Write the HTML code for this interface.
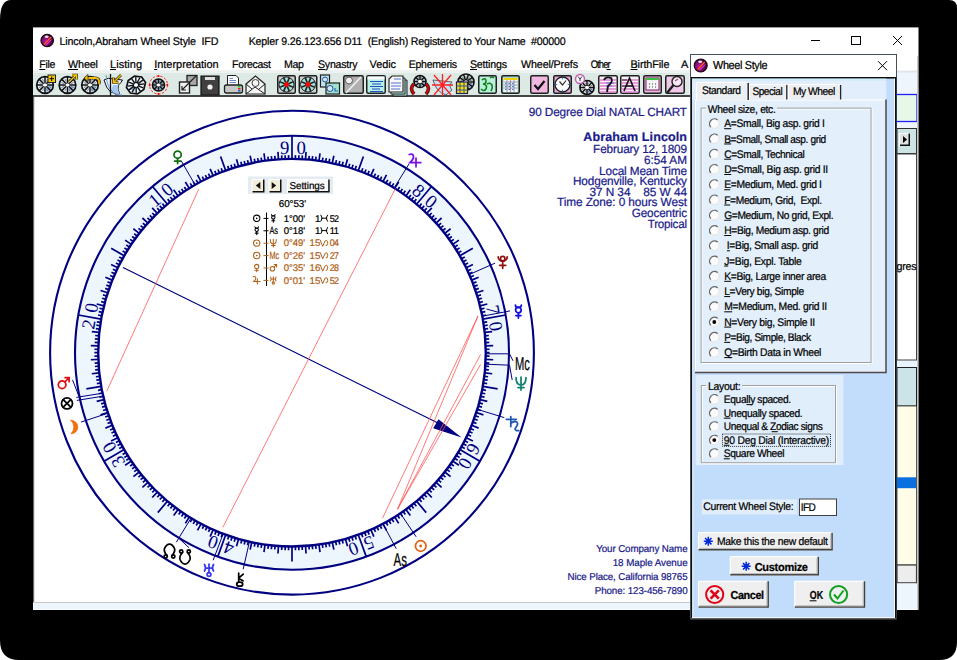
<!DOCTYPE html><html><head><meta charset="utf-8"><title>Kepler Wheel Style</title><style>*{margin:0;padding:0}html,body{width:957px;height:660px;overflow:hidden;background:#fff}body{position:relative;font-family:"Liberation Sans",sans-serif}</style></head><body><svg width="957" height="660" viewBox="0 0 957 660" style="position:absolute;left:0;top:0;display:block" shape-rendering="auto" text-rendering="geometricPrecision">
<defs><radialGradient id="gIcon" cx="0.4" cy="0.55" r="0.6"><stop offset="0" stop-color="#c018b0"/><stop offset="0.55" stop-color="#701060"/><stop offset="1" stop-color="#280020"/></radialGradient></defs>
<path d="M11 0H949Q957 0 957 8V642Q957 660 939 660H19Q0 660 0 640V20Q0 0 11 0Z" fill="#000"/>
<rect x="33" y="27.4" width="885.5" height="582.6" fill="#fff"/>
<rect x="33" y="70" width="885" height="3" fill="#eef2f1"/>
<rect x="33" y="73" width="885" height="22" fill="#dde9e5"/><rect x="689" y="73" width="3" height="22" fill="#eef3f2"/>
<rect x="33" y="95" width="885" height="2" fill="#454545"/>
<rect x="33" y="97" width="1.2" height="506" fill="#6a6a6a"/>
<rect x="33" y="602" width="885" height="1" fill="#c8c8c8"/>
<rect x="34" y="603" width="883" height="6" fill="#eef6fd"/>
<circle cx="47.2" cy="40.5" r="6.3" fill="url(#gIcon)" stroke="#1a0010" stroke-width="1.1"/><path d="M44.2 44.5L51.2 37.0" stroke="#ff5020" stroke-width="1.6"/><path d="M45.7 45.5L51.7 39.5" stroke="#ff40ff" stroke-width="1"/><ellipse cx="46.7" cy="36.7" rx="2" ry="1.3" fill="#fff" opacity="0.85"/>
<g transform="translate(59.5,45.1) scale(0.9725,1)"><text x="0" y="0" font-family="Liberation Sans" font-size="11" fill="#000" stroke="#000" stroke-width="0.22" text-anchor="start" textLength="163.50" lengthAdjust="spacing" style="white-space:pre" >Lincoln,Abraham Wheel Style  IFD</text></g>
<g transform="translate(248.7,45.1) scale(0.9656,1)"><text x="0" y="0" font-family="Liberation Sans" font-size="11" fill="#000" stroke="#000" stroke-width="0.22" text-anchor="start" textLength="328.30" lengthAdjust="spacing" style="white-space:pre" >Kepler 9.26.123.656 D11  (English) Registered to Your Name  #00000</text></g>
<path d="M811 40.5H820" stroke="#000" stroke-width="1"/>
<rect x="851.5" y="36.5" width="9" height="8" fill="none" stroke="#000" stroke-width="1"/>
<path d="M893 36L902 45M902 36L893 45" stroke="#000" stroke-width="1"/>
<g transform="translate(39.3,67.7) scale(0.9531,1)"><text x="0" y="0" font-family="Liberation Sans" font-size="11" fill="#000" stroke="#000" stroke-width="0.22" text-anchor="start" textLength="16.89" lengthAdjust="spacing" style="white-space:pre" >File</text></g>
<rect x="39.3" y="69" width="6.0" height="1" fill="#000"/>
<g transform="translate(68,67.7) scale(0.9809,1)"><text x="0" y="0" font-family="Liberation Sans" font-size="11" fill="#000" stroke="#000" stroke-width="0.22" text-anchor="start" textLength="30.58" lengthAdjust="spacing" style="white-space:pre" >Wheel</text></g>
<rect x="68" y="69" width="10" height="1" fill="#000"/>
<text x="110" y="67.7" font-family="Liberation Sans" font-size="11" fill="#000" stroke="#000" stroke-width="0.22" text-anchor="start" textLength="32.00" lengthAdjust="spacing" style="white-space:pre" >Listing</text>
<rect x="110" y="69" width="6" height="1" fill="#000"/>
<g transform="translate(154.2,67.7) scale(0.9968,1)"><text x="0" y="0" font-family="Liberation Sans" font-size="11" fill="#000" stroke="#000" stroke-width="0.22" text-anchor="start" textLength="64.61" lengthAdjust="spacing" style="white-space:pre" >Interpretation</text></g>
<rect x="154.2" y="69" width="3.0" height="1" fill="#000"/>
<g transform="translate(232,67.7) scale(0.9547,1)"><text x="0" y="0" font-family="Liberation Sans" font-size="11" fill="#000" stroke="#000" stroke-width="0.22" text-anchor="start" textLength="40.85" lengthAdjust="spacing" style="white-space:pre" >Forecast</text></g>
<g transform="translate(284,67.7) scale(0.9668,1)"><text x="0" y="0" font-family="Liberation Sans" font-size="11" fill="#000" stroke="#000" stroke-width="0.22" text-anchor="start" textLength="20.69" lengthAdjust="spacing" style="white-space:pre" >Map</text></g>
<g transform="translate(318,67.7) scale(0.9620,1)"><text x="0" y="0" font-family="Liberation Sans" font-size="11" fill="#000" stroke="#000" stroke-width="0.22" text-anchor="start" textLength="41.16" lengthAdjust="spacing" style="white-space:pre" >Synastry</text></g>
<rect x="318" y="69" width="7" height="1" fill="#000"/>
<g transform="translate(369.6,67.7) scale(0.9905,1)"><text x="0" y="0" font-family="Liberation Sans" font-size="11" fill="#000" stroke="#000" stroke-width="0.22" text-anchor="start" textLength="26.65" lengthAdjust="spacing" style="white-space:pre" >Vedic</text></g>
<g transform="translate(408.7,67.7) scale(0.9585,1)"><text x="0" y="0" font-family="Liberation Sans" font-size="11" fill="#000" stroke="#000" stroke-width="0.22" text-anchor="start" textLength="50.39" lengthAdjust="spacing" style="white-space:pre" >Ephemeris</text></g>
<g transform="translate(470,67.7) scale(0.9648,1)"><text x="0" y="0" font-family="Liberation Sans" font-size="11" fill="#000" stroke="#000" stroke-width="0.22" text-anchor="start" textLength="38.35" lengthAdjust="spacing" style="white-space:pre" >Settings</text></g>
<rect x="470" y="69" width="7" height="1" fill="#000"/>
<g transform="translate(521,67.7) scale(0.9754,1)"><text x="0" y="0" font-family="Liberation Sans" font-size="11" fill="#000" stroke="#000" stroke-width="0.22" text-anchor="start" textLength="58.44" lengthAdjust="spacing" style="white-space:pre" >Wheel/Prefs</text></g>
<g transform="translate(590.7,67.7) scale(0.8505,1)"><text x="0" y="0" font-family="Liberation Sans" font-size="11" fill="#000" stroke="#000" stroke-width="0.22" text-anchor="start" textLength="23.40" lengthAdjust="spacing" style="white-space:pre" >Other</text></g>
<rect x="606.6" y="69" width="4.0" height="1" fill="#000"/>
<g transform="translate(630.5,67.7) scale(0.9820,1)"><text x="0" y="0" font-family="Liberation Sans" font-size="11" fill="#000" stroke="#000" stroke-width="0.22" text-anchor="start" textLength="39.61" lengthAdjust="spacing" style="white-space:pre" >BirthFile</text></g>
<rect x="630.5" y="69" width="7.0" height="1" fill="#000"/>
<text x="681" y="67.7" font-family="Liberation Sans" font-size="11" fill="#000" stroke="#000" stroke-width="0.22" text-anchor="start" textLength="8.00" lengthAdjust="spacing" style="white-space:pre" >A</text>
<circle cx="45" cy="85" r="8.3" fill="#eef4fc" stroke="#101010" stroke-width="1.7"/><path d="M46.66 86.66L52.055 85.83A7.055000000000001 7.055000000000001 0 0 1 45.83 92.055Z" fill="#a8c8f0"/><path d="M46.50 85.00L53.30 85.00M46.06 86.06L50.87 90.87M45.00 86.50L45.00 93.30M43.94 86.06L39.13 90.87M43.50 85.00L36.70 85.00M43.94 83.94L39.13 79.13M45.00 83.50L45.00 76.70M46.06 83.94L50.87 79.13" stroke="#101010" stroke-width="1.5"/><path d="M48.45 86.43L51.13 87.54M46.43 88.45L47.54 91.13M43.57 88.45L42.46 91.13M41.55 86.43L38.87 87.54M41.55 83.57L38.87 82.46M43.57 81.55L42.46 78.87M46.43 81.55L47.54 78.87M48.45 83.57L51.13 82.46" stroke="#405060" stroke-width="0.7"/><rect x="43.2" y="83.8" width="3.6" height="2.4" fill="#fff"/>
<rect x="48" y="75" width="7.5" height="7.5" fill="#f8c800" stroke="#202020" stroke-width="1"/><path d="M51.7 76.5V81M49.5 78.7H54" stroke="#000" stroke-width="1"/>
<circle cx="67.5" cy="85" r="8.3" fill="#eef4fc" stroke="#101010" stroke-width="1.7"/><path d="M69.16 86.66L74.555 85.83A7.055000000000001 7.055000000000001 0 0 1 68.33 92.055Z" fill="#a8c8f0"/><path d="M69.00 85.00L75.80 85.00M68.56 86.06L73.37 90.87M67.50 86.50L67.50 93.30M66.44 86.06L61.63 90.87M66.00 85.00L59.20 85.00M66.44 83.94L61.63 79.13M67.50 83.50L67.50 76.70M68.56 83.94L73.37 79.13" stroke="#101010" stroke-width="1.5"/><path d="M70.95 86.43L73.63 87.54M68.93 88.45L70.04 91.13M66.07 88.45L64.96 91.13M64.05 86.43L61.37 87.54M64.05 83.57L61.37 82.46M66.07 81.55L64.96 78.87M68.93 81.55L70.04 78.87M70.95 83.57L73.63 82.46" stroke="#405060" stroke-width="0.7"/><rect x="65.7" y="83.8" width="3.6" height="2.4" fill="#fff"/>
<path d="M69 82L76 75M72 75H76.5V79.5" stroke="#202020" stroke-width="2.6" fill="none"/><path d="M69 82L76 75M72 75H76.5V79.5" stroke="#f8c800" stroke-width="1.4" fill="none"/>
<circle cx="90" cy="85" r="8.3" fill="#eef4fc" stroke="#101010" stroke-width="1.7"/><path d="M91.66 86.66L97.055 85.83A7.055000000000001 7.055000000000001 0 0 1 90.83 92.055Z" fill="#a8c8f0"/><path d="M91.50 85.00L98.30 85.00M91.06 86.06L95.87 90.87M90.00 86.50L90.00 93.30M88.94 86.06L84.13 90.87M88.50 85.00L81.70 85.00M88.94 83.94L84.13 79.13M90.00 83.50L90.00 76.70M91.06 83.94L95.87 79.13" stroke="#101010" stroke-width="1.5"/><path d="M93.45 86.43L96.13 87.54M91.43 88.45L92.54 91.13M88.57 88.45L87.46 91.13M86.55 86.43L83.87 87.54M86.55 83.57L83.87 82.46M88.57 81.55L87.46 78.87M91.43 81.55L92.54 78.87M93.45 83.57L96.13 82.46" stroke="#405060" stroke-width="0.7"/><rect x="88.2" y="83.8" width="3.6" height="2.4" fill="#fff"/>
<path d="M86 78H95Q100 78 99 84" stroke="#202020" stroke-width="3.2" fill="none"/><path d="M86 78H95Q100 78 99 84" stroke="#f8c000" stroke-width="1.8" fill="none"/><path d="M84 78L88 74.5V81.5Z" fill="#f8c000" stroke="#202020" stroke-width="0.8"/>
<path d="M104 80Q108 77 113 79L122.5 80Q121 83 118.5 85Q117 89 119.5 93.5L117 95Q113 92 110.5 92Q106 88 104 80Z" fill="#eef4fc" stroke="#101010" stroke-width="1"/>
<path d="M113 85L118.5 85Q117 89 119.5 93.5L117 95Q113 92 110.5 92Z" fill="#a8c8f0"/>
<path d="M106 75Q107 88 114 93Q118 95 122 95" stroke="#6090d0" stroke-width="0.9" fill="none"/>
<path d="M110.5 74V96" stroke="#101010" stroke-width="1.3"/>
<path d="M121 75L114 82M113.5 77.5V82.5H118.5" stroke="#202020" stroke-width="2.6" fill="none"/><path d="M121 75L114 82M113.5 77.5V82.5H118.5" stroke="#f8c000" stroke-width="1.4" fill="none"/>
<polygon points="145.24,88.37 139.83,93.13 132.17,93.13 126.76,88.37 126.76,81.63 132.17,76.87 139.83,76.87 145.24,81.63" fill="#eef4fc" stroke="#101010" stroke-width="1.7" transform="rotate(-35 136 85)"/>
<path d="M129 88L136 85L134 93Z" fill="#a8c8f0"/>
<path d="M138.00 85.00L144.50 85.00M137.73 85.90L143.36 88.75M137.00 86.56L140.25 91.50M136.00 86.80L136.00 92.50M135.00 86.56L131.75 91.50M134.27 85.90L128.64 88.75M134.00 85.00L127.50 85.00M134.27 84.10L128.64 81.25M135.00 83.44L131.75 78.50M136.00 83.20L136.00 77.50M137.00 83.44L140.25 78.50M137.73 84.10L143.36 81.25" stroke="#101010" stroke-width="1.4" transform="rotate(-35 136 85)"/>
<circle cx="136" cy="85" r="1.5" fill="#fff"/>
<circle cx="158.5" cy="85" r="9" fill="none" stroke="#ff2020" stroke-width="1" stroke-dasharray="2.4 1.6"/>
<path d="M158.5 75.3V77M158.5 93V94.7M148.8 85H150.5M166.5 85H168.2" stroke="#ff0000" stroke-width="1.8"/>
<circle cx="158.5" cy="85" r="6" fill="#b8c8dc" stroke="#101010" stroke-width="1.7"/><path d="M159.7 86.2L163.6 85.6A5.1 5.1 0 0 1 159.1 90.1Z" fill="#a8c8f0"/><path d="M160.00 85.00L164.50 85.00M159.56 86.06L162.74 89.24M158.50 86.50L158.50 91.00M157.44 86.06L154.26 89.24M157.00 85.00L152.50 85.00M157.44 83.94L154.26 80.76M158.50 83.50L158.50 79.00M159.56 83.94L162.74 80.76" stroke="#101010" stroke-width="1.5"/><path d="M160.99 86.03L162.93 86.84M159.53 87.49L160.34 89.43M157.47 87.49L156.66 89.43M156.01 86.03L154.07 86.84M156.01 83.97L154.07 83.16M157.47 82.51L156.66 80.57M159.53 82.51L160.34 80.57M160.99 83.97L162.93 83.16" stroke="#405060" stroke-width="0.7"/><rect x="156.7" y="83.8" width="3.6" height="2.4" fill="#fff"/>
<rect x="187" y="75.5" width="10" height="10" fill="#a8a8a8" stroke="#202020" stroke-width="1.3"/><rect x="179.5" y="82" width="10" height="11" fill="#f0f0f0" stroke="#202020" stroke-width="1.4"/><path d="M182 90L189 83M182 86V90H186M190 82L196 76" stroke="#202020" stroke-width="1.2" fill="none"/>
<path d="M201 76H219V95H201V80Z" fill="#404040" stroke="#101010" stroke-width="1.2"/><rect x="205" y="77" width="10" height="3" fill="#e0e0e0"/><circle cx="210" cy="87" r="2.6" fill="#f0f0f0"/>
<path d="M227.5 75.5H236L238.5 78V86H227.5Z" fill="#fcfcfc" stroke="#202020" stroke-width="1"/><path d="M229.5 78.5H233M229.5 80.5H236M229.5 82.5H236" stroke="#3050b0" stroke-width="0.7"/><rect x="224.5" y="85" width="18" height="8" rx="2" fill="#c8c8c8" stroke="#202020" stroke-width="1.3"/><rect x="238" y="86" width="2.5" height="1.5" fill="#20d020"/><rect x="238" y="88" width="2.5" height="1.5" fill="#e02020"/><rect x="238" y="90" width="2.5" height="1.5" fill="#2060e0"/>
<path d="M246 84L255.5 76L265 84V94H246Z" fill="#f4f4f4" stroke="#202020" stroke-width="1.2"/><path d="M246 94L255 87L265 94M246 84L252 89M265 84L259 89" stroke="#202020" stroke-width="1" fill="none"/><circle cx="255.5" cy="83" r="3.5" fill="none" stroke="#404040" stroke-width="1"/>
<rect x="277.75" y="75.75" width="17.5" height="17.5" rx="1.5" fill="#d0d0d0" stroke="#202020" stroke-width="1.5"/>
<circle cx="286.5" cy="84.5" r="7.5" fill="#a0e0d8" stroke="#202020" stroke-width="1"/>
<path d="M288.35 85.27L293.43 87.37M287.27 86.35L289.37 91.43M285.73 86.35L283.63 91.43M284.65 85.27L279.57 87.37M284.65 83.73L279.57 81.63M285.73 82.65L283.63 77.57M287.27 82.65L289.37 77.57M288.35 83.73L293.43 81.63" stroke="#202020" stroke-width="1.6"/>
<path d="M286.5 81.5L289.5 84.5L286.5 87.5L283.5 84.5Z" fill="#ff0000"/>
<rect x="299.25" y="75.75" width="17.5" height="17.5" rx="1.5" fill="#d0d0d0" stroke="#202020" stroke-width="1.5"/>
<circle cx="308.0" cy="84.5" r="7.5" fill="#a0e0d8" stroke="#202020" stroke-width="1"/>
<path d="M309.85 85.27L314.93 87.37M308.77 86.35L310.87 91.43M307.23 86.35L305.13 91.43M306.15 85.27L301.07 87.37M306.15 83.73L301.07 81.63M307.23 82.65L305.13 77.57M308.77 82.65L310.87 77.57M309.85 83.73L314.93 81.63" stroke="#202020" stroke-width="1.6"/>
<path d="M308.0 81.5L311.0 84.5L308.0 87.5L305.0 84.5Z" fill="#ff0000"/>
<rect x="320.5" y="75" width="9" height="12" fill="#c0e8f0" stroke="#202020" stroke-width="1.2"/><circle cx="325" cy="79.5" r="2.5" fill="#d8e8f8" stroke="#2050a0" stroke-width="1"/><rect x="326" y="83" width="13.5" height="11" fill="#a0e0d0" stroke="#202020" stroke-width="1.2"/><circle cx="330" cy="88.5" r="3" fill="#d8e8f8" stroke="#2050a0" stroke-width="1"/><path d="M335 88V91H338" stroke="#2070c0" stroke-width="1.2" fill="none"/>
<rect x="343.75" y="75.75" width="19.5" height="17.5" rx="1.5" fill="#b0b0b0" stroke="#202020" stroke-width="1.5"/>
<circle cx="349" cy="80.5" r="3.5" fill="#f0f0f0" stroke="#404040" stroke-width="0.8"/><path d="M346 93L361 77" stroke="#f0f0f0" stroke-width="1.6"/><path d="M357 86A4 4 0 1 0 361 93A3 3 0 1 1 357 86" fill="#f0f0f0"/>
<rect x="366.75" y="75.75" width="18.5" height="17.5" rx="1.5" fill="#b8f0e8" stroke="#202020" stroke-width="1.5"/>
<rect x="367.5" y="76.5" width="17" height="3" fill="#f8f8f8"/><path d="M370 81.5H383M372 84H381M370 86.5H383M372 89H380M370 91.5H383" stroke="#2050c0" stroke-width="1.1"/>
<path d="M393 80H407V96H393Z" fill="#a8e0d8" stroke="#202020" stroke-width="1"/><path d="M391 78H405V94H391Z" fill="#c8f0e8" stroke="#202020" stroke-width="1"/><path d="M389 79L392 76H403V92H389Z" fill="#f8f8f8" stroke="#202020" stroke-width="1.1"/><path d="M394 79H401M391 83H401M391 86H401M391 89H400" stroke="#5070d0" stroke-width="1"/>
<circle cx="420" cy="81.5" r="6" fill="#eef4fc" stroke="#101010" stroke-width="1.7"/><path d="M421.2 82.7L425.1 82.1A5.1 5.1 0 0 1 420.6 86.6Z" fill="#a8c8f0"/><path d="M421.50 81.50L426.00 81.50M421.06 82.56L424.24 85.74M420.00 83.00L420.00 87.50M418.94 82.56L415.76 85.74M418.50 81.50L414.00 81.50M418.94 80.44L415.76 77.26M420.00 80.00L420.00 75.50M421.06 80.44L424.24 77.26" stroke="#101010" stroke-width="1.5"/><path d="M422.49 82.53L424.43 83.34M421.03 83.99L421.84 85.93M418.97 83.99L418.16 85.93M417.51 82.53L415.57 83.34M417.51 80.47L415.57 79.66M418.97 79.01L418.16 77.07M421.03 79.01L421.84 77.07M422.49 80.47L424.43 79.66" stroke="#405060" stroke-width="0.7"/><rect x="418.2" y="80.3" width="3.6" height="2.4" fill="#fff"/>
<path d="M414 84Q409 88 414 94M426 84Q431 88 426 94" stroke="#202020" stroke-width="3.6" fill="none"/><path d="M414 84Q409 88 414 94M426 84Q431 88 426 94" stroke="#e00000" stroke-width="2.2" fill="none"/>
<path d="M433 80Q436 92 446 95L452 90Q448 86 452 82Z" fill="#c8e0f4" stroke="#404040" stroke-width="0.8"/>
<path d="M434 75L451 95M451 75L434 95M442.5 74V96M432 85H453" stroke="#ff2020" stroke-width="1.3"/>
<circle cx="466" cy="82" r="8" fill="#e8f4e8" stroke="#101010" stroke-width="1.7"/><path d="M467.6 83.6L472.8 82.8A6.8 6.8 0 0 1 466.8 88.8Z" fill="#a8c8f0"/><path d="M467.50 82.00L474.00 82.00M467.21 82.88L472.47 86.70M466.46 83.43L468.47 89.61M465.54 83.43L463.53 89.61M464.79 82.88L459.53 86.70M464.50 82.00L458.00 82.00M464.79 81.12L459.53 77.30M465.54 80.57L463.53 74.39M466.46 80.57L468.47 74.39M467.21 81.12L472.47 77.30" stroke="#101010" stroke-width="1.5"/><path d="M469.42 83.11L472.09 83.98M468.12 84.91L469.76 87.18M466.00 85.60L466.00 88.40M463.88 84.91L462.24 87.18M462.58 83.11L459.91 83.98M462.58 80.89L459.91 80.02M463.88 79.09L462.24 76.82M466.00 78.40L466.00 75.60M468.12 79.09L469.76 76.82M469.42 80.89L472.09 80.02" stroke="#405060" stroke-width="0.7"/><rect x="464.2" y="80.8" width="3.6" height="2.4" fill="#fff"/>
<rect x="456.5" y="82" width="11" height="11.5" fill="#f8e000" stroke="#202060" stroke-width="1.2"/><path d="M460 82V93.5M464 82V93.5M456.5 86H467.5M456.5 90H467.5" stroke="#3050a0" stroke-width="1"/>
<rect x="478.75" y="75.75" width="17.5" height="17.5" rx="1.5" fill="#b8f0d8" stroke="#202020" stroke-width="1.5"/>
<path d="M482 80Q486 77 486 81Q486 84 483 84Q488 85 486 89Q484 92 481 89M487 84Q490 82 492 85Q493 88 491 91M490 78Q492 76 494 78" stroke="#108020" stroke-width="1.6" fill="none"/>
<rect x="501.75" y="75.75" width="17.5" height="17.5" rx="1.5" fill="#a8d8c8" stroke="#202020" stroke-width="1.5"/>
<rect x="503.5" y="78" width="14" height="14" fill="#f8f8f8"/><rect x="503.5" y="78" width="14" height="2" fill="#f0d000"/><path d="M503.5 82H517.5M503.5 85H517.5M503.5 88H517.5M507 80V92M510.5 80V92M514 80V92" stroke="#8080a0" stroke-width="0.8"/><path d="M505 83.5H506.5M508.5 83.5H510M512 83.5H513.5M505 86.5H506.5M508.5 86.5H510M512 86.5H513.5M505 89.5H506.5M508.5 89.5H510M512 89.5H513.5" stroke="#2080e0" stroke-width="1.2"/>
<rect x="530.75" y="75.75" width="17.5" height="17.5" rx="1.5" fill="#f0b8e0" stroke="#202020" stroke-width="1.5"/>
<path d="M534.5 85L538 89L544.5 81" stroke="#101010" stroke-width="2.2" fill="none"/>
<rect x="553.75" y="75.75" width="17.5" height="17.5" rx="1.5" fill="#e8a8d8" stroke="#202020" stroke-width="1.5"/>
<circle cx="562.5" cy="84.5" r="7.5" fill="#fcfcfc" stroke="#202020" stroke-width="1.3"/><path d="M559.5 81.5L562.5 85L566 80.5" stroke="#303030" stroke-width="1.2" fill="none"/><path d="M562.5 77.8V79.3M562.5 89.7V91.2M555.8 84.5H557.3M567.7 84.5H569.2" stroke="#2080e0" stroke-width="1.2"/>
<circle cx="587" cy="87.5" r="7" fill="#fcfcfc" stroke="#101010" stroke-width="1.7"/><path d="M588.4 88.9L592.95 88.2A5.95 5.95 0 0 1 587.7 93.45Z" fill="#a8c8f0"/><path d="M588.50 87.50L594.00 87.50M588.06 88.56L591.95 92.45M587.00 89.00L587.00 94.50M585.94 88.56L582.05 92.45M585.50 87.50L580.00 87.50M585.94 86.44L582.05 82.55M587.00 86.00L587.00 80.50M588.06 86.44L591.95 82.55" stroke="#101010" stroke-width="1.5"/><path d="M589.91 88.71L592.17 89.64M588.21 90.41L589.14 92.67M585.79 90.41L584.86 92.67M584.09 88.71L581.83 89.64M584.09 86.29L581.83 85.36M585.79 84.59L584.86 82.33M588.21 84.59L589.14 82.33M589.91 86.29L592.17 85.36" stroke="#405060" stroke-width="0.7"/><rect x="585.2" y="86.3" width="3.6" height="2.4" fill="#fff"/>
<circle cx="580" cy="79" r="4.5" fill="#fcf4fa" stroke="#c060b0" stroke-width="1.4"/><path d="M578 76.5L580 79L582 76.5M580 79V81" stroke="#202020" stroke-width="0.9" fill="none"/>
<rect x="598.75" y="75.75" width="18.5" height="17.5" rx="1.5" fill="#f8f0f8" stroke="#202020" stroke-width="1.5"/>
<path d="M600 80H616M600 83H616M600 86H616M600 89H616M600 92H616" stroke="#e080d0" stroke-width="1.4"/><path d="M606 83H614M606 86H612" stroke="#4070e0" stroke-width="0.9"/><path d="M604 80Q606 76 611 78Q614 81 608 86L607 92" stroke="#101010" stroke-width="1.8" fill="none"/>
<rect x="620.75" y="75.75" width="18.5" height="17.5" rx="1.5" fill="#f8f0f8" stroke="#202020" stroke-width="1.5"/>
<path d="M622 80H638M622 83H638M622 86H638M622 89H638M622 92H638" stroke="#e080d0" stroke-width="1.4"/><path d="M622 80H627M622 86H626" stroke="#202020" stroke-width="1"/><path d="M624 91L629.5 78L635 91M626.5 86H632.5" stroke="#101010" stroke-width="1.6" fill="none"/>
<rect x="643.75" y="75.75" width="17.5" height="17.5" rx="1.5" fill="#e8b8e0" stroke="#202020" stroke-width="1.5"/>
<rect x="646" y="78" width="13" height="12" fill="#f4f4f4" stroke="#802060" stroke-width="1"/><rect x="646" y="78" width="13" height="2" fill="#40c040"/><path d="M649 84H650M652 84H653M655 84H656M649 87H650M652 87H653M655 87H656" stroke="#404040" stroke-width="1"/>
<rect x="665.75" y="75.75" width="18.5" height="17.5" rx="1.5" fill="#f0c8e8" stroke="#202020" stroke-width="1.5"/>
<circle cx="677" cy="81.5" r="5" fill="#f8e8f4" stroke="#202020" stroke-width="1.4"/><path d="M673.5 85L667 93" stroke="#202020" stroke-width="2.4"/><path d="M675 81L678 79" stroke="#a04080" stroke-width="1.2"/>
<rect x="896" y="70" width="21.5" height="533" fill="#eef5fc"/>
<rect x="896" y="71" width="21.5" height="1.5" fill="#e4e4e4"/>
<rect x="896" y="94.5" width="21" height="27" fill="#e8f8e8" stroke="#2020ff" stroke-width="1.3"/>
<rect x="897" y="128.5" width="19.5" height="25" fill="#cce4e4" stroke="#303030" stroke-width="1"/>
<rect x="899" y="133" width="11" height="13" fill="#e0e0e0"/><path d="M899.5 146V133.5H910" stroke="#fff" stroke-width="1" fill="none"/><path d="M900 145.25H909.25V133.5" stroke="#101010" stroke-width="1.5" fill="none"/>
<path d="M903 136L907 139.5L903 143Z" fill="#000"/>
<rect x="897" y="154" width="19.5" height="206" fill="#fff" stroke="#404040" stroke-width="1"/>
<g transform="translate(896.5,270) scale(0.9668,1)"><text x="0" y="0" font-family="Liberation Sans" font-size="11" fill="#000" stroke="#000" stroke-width="0.22" text-anchor="start" textLength="20.69" lengthAdjust="spacing" style="white-space:pre" >gres</text></g>
<rect x="897" y="361" width="19.5" height="6" fill="#e8f4fc"/>
<rect x="897" y="367.5" width="19.5" height="38.5" fill="#cce4e8" stroke="#202020" stroke-width="1"/>
<rect x="897" y="406" width="19.5" height="159" fill="#fffde8" stroke="#303030" stroke-width="0.8"/>
<rect x="897" y="477.3" width="19" height="10.9" fill="#0a70e0"/>
<rect x="897" y="565" width="19.5" height="17.8" fill="#ededed" stroke="#404040" stroke-width="1.2"/>
<rect x="897" y="583.5" width="19.5" height="25.5" fill="#eef6fd"/>
<rect x="917" y="56" width="1" height="554" fill="#c8c8c8"/>
<g>
<circle cx="292.0" cy="352.7" r="205.40" fill="none" stroke="#eef6fd" stroke-width="23.20"/>
<circle cx="292.0" cy="352.7" r="241.9" fill="none" stroke="#000080" stroke-width="2.1"/>
<circle cx="292.0" cy="352.7" r="217.0" fill="none" stroke="#000080" stroke-width="2.1"/>
<circle cx="292.0" cy="352.7" r="193.8" fill="none" stroke="#000080" stroke-width="2.4"/>
<path d="M292.00 158.90L292.00 135.70M295.38 158.93L295.45 155.13M298.76 159.02L298.90 155.22M302.14 159.17L302.34 155.37M305.52 159.37L306.04 151.89M308.89 159.64L309.22 155.85M312.26 159.96L312.65 156.18M315.62 160.34L316.08 156.57M318.97 160.79L320.02 153.36M322.32 161.29L322.91 157.53M325.65 161.84L326.31 158.10M328.98 162.46L329.70 158.73M332.29 163.13L333.85 155.80M335.60 163.87L336.45 160.16M338.88 164.66L339.80 160.97M342.16 165.50L343.14 161.83M345.42 166.41L347.49 159.20M348.66 167.37L349.77 163.73M351.89 168.39L353.06 164.77M355.10 169.46L356.33 165.87M358.28 170.59L363.41 156.49M361.45 171.77L362.81 168.22M364.60 173.01L366.02 169.49M367.72 174.31L369.21 170.81M370.83 175.65L373.88 168.80M373.90 177.06L375.51 173.61M376.96 178.51L378.62 175.10M379.98 180.02L381.71 176.64M382.98 181.58L386.50 174.96M385.96 183.20L387.80 179.88M388.90 184.86L390.80 181.57M391.81 186.58L393.77 183.32M394.70 188.35L398.67 181.99M397.55 190.17L399.62 186.98M400.37 192.03L402.50 188.88M403.16 193.95L405.34 190.84M405.91 195.91L410.32 189.84M408.63 197.92L410.92 194.89M411.32 199.98L413.65 196.99M413.96 202.09L416.35 199.14M416.57 204.24L431.48 186.47M419.14 206.44L421.64 203.57M421.68 208.68L424.22 205.85M424.17 210.96L426.76 208.18M426.62 213.29L431.83 207.90M429.04 215.66L431.72 212.98M431.41 218.08L434.14 215.44M433.74 220.53L436.52 217.94M436.02 223.02L441.60 218.00M438.26 225.56L441.13 223.06M440.46 228.13L443.37 225.69M442.61 230.74L445.56 228.35M444.72 233.38L450.63 228.77M446.78 236.07L449.81 233.78M448.79 238.79L451.86 236.55M450.75 241.54L453.86 239.36M452.67 244.33L458.89 240.13M454.53 247.15L457.72 245.08M456.35 250.00L459.57 247.99M458.12 252.89L461.38 250.93M459.84 255.80L472.83 248.30M461.50 258.74L464.82 256.90M463.12 261.72L466.47 259.93M464.68 264.72L468.06 262.99M466.19 267.74L472.93 264.46M467.64 270.80L471.09 269.19M469.05 273.87L472.52 272.33M470.39 276.98L473.89 275.49M471.69 280.10L478.64 277.29M472.93 283.25L476.48 281.89M474.11 286.42L477.68 285.12M475.24 289.60L478.83 288.37M476.31 292.81L483.45 290.49M477.33 296.04L480.97 294.93M478.29 299.28L481.95 298.23M479.20 302.54L482.87 301.56M480.04 305.82L487.32 304.00M480.83 309.10L484.54 308.25M481.57 312.41L485.28 311.62M482.24 315.72L485.97 315.00M482.86 319.05L505.70 315.02M483.41 322.38L487.17 321.79M483.91 325.73L487.68 325.20M484.36 329.08L488.13 328.62M484.74 332.44L492.20 331.66M485.06 335.81L488.85 335.48M485.33 339.18L489.12 338.92M485.53 342.56L489.33 342.36M485.68 345.94L493.18 345.67M485.77 349.32L489.57 349.25M485.80 352.70L489.60 352.70M485.77 356.08L489.57 356.15M485.68 359.46L493.18 359.73M485.53 362.84L489.33 363.04M485.33 366.22L489.12 366.48M485.06 369.59L488.85 369.92M484.74 372.96L492.20 373.74M484.36 376.32L488.13 376.78M483.91 379.67L487.68 380.20M483.41 383.02L487.17 383.61M482.86 386.35L497.63 388.96M482.24 389.68L485.97 390.40M481.57 392.99L485.28 393.78M480.83 396.30L484.54 397.15M480.04 399.58L487.32 401.40M479.20 402.86L482.87 403.84M478.29 406.12L481.95 407.17M477.33 409.36L480.97 410.47M476.31 412.59L483.45 414.91M475.24 415.80L478.83 417.03M474.11 418.98L477.68 420.28M472.93 422.15L476.48 423.51M471.69 425.30L478.64 428.11M470.39 428.42L473.89 429.91M469.05 431.53L472.52 433.07M467.64 434.60L471.09 436.21M466.19 437.66L472.93 440.94M464.68 440.68L468.06 442.41M463.12 443.68L466.47 445.47M461.50 446.66L464.82 448.50M459.84 449.60L479.93 461.20M458.12 452.51L461.38 454.47M456.35 455.40L459.57 457.41M454.53 458.25L457.72 460.32M452.67 461.07L458.89 465.27M450.75 463.86L453.86 466.04M448.79 466.61L451.86 468.85M446.78 469.33L449.81 471.62M444.72 472.02L450.63 476.63M442.61 474.66L445.56 477.05M440.46 477.27L443.37 479.71M438.26 479.84L441.13 482.34M436.02 482.38L441.60 487.40M433.74 484.87L436.52 487.46M431.41 487.32L434.14 489.96M429.04 489.74L431.72 492.42M426.62 492.11L431.83 497.50M424.17 494.44L426.76 497.22M421.68 496.72L424.22 499.55M419.14 498.96L421.64 501.83M416.57 501.16L426.21 512.65M413.96 503.31L416.35 506.26M411.32 505.42L413.65 508.41M408.63 507.48L410.92 510.51M405.91 509.49L410.32 515.56M403.16 511.45L405.34 514.56M400.37 513.37L402.50 516.52M397.55 515.23L399.62 518.42M394.70 517.05L398.67 523.41M391.81 518.82L393.77 522.08M388.90 520.54L390.80 523.83M385.96 522.20L387.80 525.52M382.98 523.82L386.50 530.44M379.98 525.38L381.71 528.76M376.96 526.89L378.62 530.30M373.90 528.34L375.51 531.79M370.83 529.75L373.88 536.60M367.72 531.09L369.21 534.59M364.60 532.39L366.02 535.91M361.45 533.63L362.81 537.18M358.28 534.81L366.22 556.61M355.10 535.94L356.33 539.53M351.89 537.01L353.06 540.63M348.66 538.03L349.77 541.67M345.42 538.99L347.49 546.20M342.16 539.90L343.14 543.57M338.88 540.74L339.80 544.43M335.60 541.53L336.45 545.24M332.29 542.27L333.85 549.60M328.98 542.94L329.70 546.67M325.65 543.56L326.31 547.30M322.32 544.11L322.91 547.87M318.97 544.61L320.02 552.04M315.62 545.06L316.08 548.83M312.26 545.44L312.65 549.22M308.89 545.76L309.22 549.55M305.52 546.03L306.04 553.51M302.14 546.23L302.34 550.03M298.76 546.38L298.90 550.18M295.38 546.47L295.45 550.27M292.00 546.50L292.00 561.50M288.62 546.47L288.55 550.27M285.24 546.38L285.10 550.18M281.86 546.23L281.66 550.03M278.48 546.03L277.96 553.51M275.11 545.76L274.78 549.55M271.74 545.44L271.35 549.22M268.38 545.06L267.92 548.83M265.03 544.61L263.98 552.04M261.68 544.11L261.09 547.87M258.35 543.56L257.69 547.30M255.02 542.94L254.30 546.67M251.71 542.27L250.15 549.60M248.40 541.53L247.55 545.24M245.12 540.74L244.20 544.43M241.84 539.90L240.86 543.57M238.58 538.99L236.51 546.20M235.34 538.03L234.23 541.67M232.11 537.01L230.94 540.63M228.90 535.94L227.67 539.53M225.72 534.81L217.78 556.61M222.55 533.63L221.19 537.18M219.40 532.39L217.98 535.91M216.28 531.09L214.79 534.59M213.17 529.75L210.12 536.60M210.10 528.34L208.49 531.79M207.04 526.89L205.38 530.30M204.02 525.38L202.29 528.76M201.02 523.82L197.50 530.44M198.04 522.20L196.20 525.52M195.10 520.54L193.20 523.83M192.19 518.82L190.23 522.08M189.30 517.05L185.33 523.41M186.45 515.23L184.38 518.42M183.63 513.37L181.50 516.52M180.84 511.45L178.66 514.56M178.09 509.49L173.68 515.56M175.37 507.48L173.08 510.51M172.68 505.42L170.35 508.41M170.04 503.31L167.65 506.26M167.43 501.16L157.79 512.65M164.86 498.96L162.36 501.83M162.32 496.72L159.78 499.55M159.83 494.44L157.24 497.22M157.38 492.11L152.17 497.50M154.96 489.74L152.28 492.42M152.59 487.32L149.86 489.96M150.26 484.87L147.48 487.46M147.98 482.38L142.40 487.40M145.74 479.84L142.87 482.34M143.54 477.27L140.63 479.71M141.39 474.66L138.44 477.05M139.28 472.02L133.37 476.63M137.22 469.33L134.19 471.62M135.21 466.61L132.14 468.85M133.25 463.86L130.14 466.04M131.33 461.07L125.11 465.27M129.47 458.25L126.28 460.32M127.65 455.40L124.43 457.41M125.88 452.51L122.62 454.47M124.16 449.60L104.07 461.20M122.50 446.66L119.18 448.50M120.88 443.68L117.53 445.47M119.32 440.68L115.94 442.41M117.81 437.66L111.07 440.94M116.36 434.60L112.91 436.21M114.95 431.53L111.48 433.07M113.61 428.42L110.11 429.91M112.31 425.30L105.36 428.11M111.07 422.15L107.52 423.51M109.89 418.98L106.32 420.28M108.76 415.80L105.17 417.03M107.69 412.59L100.55 414.91M106.67 409.36L103.03 410.47M105.71 406.12L102.05 407.17M104.80 402.86L101.13 403.84M103.96 399.58L96.68 401.40M103.17 396.30L99.46 397.15M102.43 392.99L98.72 393.78M101.76 389.68L98.03 390.40M101.14 386.35L86.37 388.96M100.59 383.02L96.83 383.61M100.09 379.67L96.32 380.20M99.64 376.32L95.87 376.78M99.26 372.96L91.80 373.74M98.94 369.59L95.15 369.92M98.67 366.22L94.88 366.48M98.47 362.84L94.67 363.04M98.32 359.46L90.82 359.73M98.23 356.08L94.43 356.15M98.20 352.70L94.40 352.70M98.23 349.32L94.43 349.25M98.32 345.94L90.82 345.67M98.47 342.56L94.67 342.36M98.67 339.18L94.88 338.92M98.94 335.81L95.15 335.48M99.26 332.44L91.80 331.66M99.64 329.08L95.87 328.62M100.09 325.73L96.32 325.20M100.59 322.38L96.83 321.79M101.14 319.05L78.30 315.02M101.76 315.72L98.03 315.00M102.43 312.41L98.72 311.62M103.17 309.10L99.46 308.25M103.96 305.82L96.68 304.00M104.80 302.54L101.13 301.56M105.71 299.28L102.05 298.23M106.67 296.04L103.03 294.93M107.69 292.81L100.55 290.49M108.76 289.60L105.17 288.37M109.89 286.42L106.32 285.12M111.07 283.25L107.52 281.89M112.31 280.10L105.36 277.29M113.61 276.98L110.11 275.49M114.95 273.87L111.48 272.33M116.36 270.80L112.91 269.19M117.81 267.74L111.07 264.46M119.32 264.72L115.94 262.99M120.88 261.72L117.53 259.93M122.50 258.74L119.18 256.90M124.16 255.80L111.17 248.30M125.88 252.89L122.62 250.93M127.65 250.00L124.43 247.99M129.47 247.15L126.28 245.08M131.33 244.33L125.11 240.13M133.25 241.54L130.14 239.36M135.21 238.79L132.14 236.55M137.22 236.07L134.19 233.78M139.28 233.38L133.37 228.77M141.39 230.74L138.44 228.35M143.54 228.13L140.63 225.69M145.74 225.56L142.87 223.06M147.98 223.02L142.40 218.00M150.26 220.53L147.48 217.94M152.59 218.08L149.86 215.44M154.96 215.66L152.28 212.98M157.38 213.29L152.17 207.90M159.83 210.96L157.24 208.18M162.32 208.68L159.78 205.85M164.86 206.44L162.36 203.57M167.43 204.24L152.52 186.47M170.04 202.09L167.65 199.14M172.68 199.98L170.35 196.99M175.37 197.92L173.08 194.89M178.09 195.91L173.68 189.84M180.84 193.95L178.66 190.84M183.63 192.03L181.50 188.88M186.45 190.17L184.38 186.98M189.30 188.35L185.33 181.99M192.19 186.58L190.23 183.32M195.10 184.86L193.20 181.57M198.04 183.20L196.20 179.88M201.02 181.58L197.50 174.96M204.02 180.02L202.29 176.64M207.04 178.51L205.38 175.10M210.10 177.06L208.49 173.61M213.17 175.65L210.12 168.80M216.28 174.31L214.79 170.81M219.40 173.01L217.98 169.49M222.55 171.77L221.19 168.22M225.72 170.59L220.59 156.49M228.90 169.46L227.67 165.87M232.11 168.39L230.94 164.77M235.34 167.37L234.23 163.73M238.58 166.41L236.51 159.20M241.84 165.50L240.86 161.83M245.12 164.66L244.20 160.97M248.40 163.87L247.55 160.16M251.71 163.13L250.15 155.80M255.02 162.46L254.30 158.73M258.35 161.84L257.69 158.10M261.68 161.29L261.09 157.53M265.03 160.79L263.98 153.36M268.38 160.34L267.92 156.57M271.74 159.96L271.35 156.18M275.11 159.64L274.78 155.85M278.48 159.37L277.96 151.89M281.86 159.17L281.66 155.37M285.24 159.02L285.10 155.22M288.62 158.93L288.55 155.13" stroke="#000080" stroke-width="1.7" fill="none"/>
<g transform="translate(292.00,147.40) rotate(0)"><text x="-2.6" y="6.3" text-anchor="end" font-family="Liberation Serif" font-size="18.8" fill="#000080">9</text><text x="4.6" y="6.3" text-anchor="start" font-family="Liberation Serif" font-size="18.8" fill="#000080">0</text></g>
<g transform="translate(423.96,195.43) rotate(40)"><text x="-2.6" y="6.3" text-anchor="end" font-family="Liberation Serif" font-size="18.8" fill="#000080">8</text><text x="4.6" y="6.3" text-anchor="start" font-family="Liberation Serif" font-size="18.8" fill="#000080">0</text></g>
<g transform="translate(494.18,317.05) rotate(80)"><text x="-2.6" y="6.3" text-anchor="end" font-family="Liberation Serif" font-size="18.8" fill="#000080">7</text><text x="4.6" y="6.3" text-anchor="start" font-family="Liberation Serif" font-size="18.8" fill="#000080">0</text></g>
<g transform="translate(469.80,455.35) rotate(120)"><text x="-2.6" y="6.3" text-anchor="end" font-family="Liberation Serif" font-size="18.8" fill="#000080">6</text><text x="4.6" y="6.3" text-anchor="start" font-family="Liberation Serif" font-size="18.8" fill="#000080">0</text></g>
<g transform="translate(362.22,545.62) rotate(160)"><text x="-2.6" y="6.3" text-anchor="end" font-family="Liberation Serif" font-size="18.8" fill="#000080">5</text><text x="4.6" y="6.3" text-anchor="start" font-family="Liberation Serif" font-size="18.8" fill="#000080">0</text></g>
<g transform="translate(221.78,545.62) rotate(200)"><text x="-2.6" y="6.3" text-anchor="end" font-family="Liberation Serif" font-size="18.8" fill="#000080">4</text><text x="4.6" y="6.3" text-anchor="start" font-family="Liberation Serif" font-size="18.8" fill="#000080">0</text></g>
<g transform="translate(114.20,455.35) rotate(240)"><text x="-2.6" y="6.3" text-anchor="end" font-family="Liberation Serif" font-size="18.8" fill="#000080">3</text><text x="4.6" y="6.3" text-anchor="start" font-family="Liberation Serif" font-size="18.8" fill="#000080">0</text></g>
<g transform="translate(89.82,317.05) rotate(280)"><text x="-2.6" y="6.3" text-anchor="end" font-family="Liberation Serif" font-size="18.8" fill="#000080">2</text><text x="4.6" y="6.3" text-anchor="start" font-family="Liberation Serif" font-size="18.8" fill="#000080">0</text></g>
<g transform="translate(160.04,195.43) rotate(320)"><text x="-2.6" y="6.3" text-anchor="end" font-family="Liberation Serif" font-size="18.8" fill="#000080">1</text><text x="4.6" y="6.3" text-anchor="start" font-family="Liberation Serif" font-size="18.8" fill="#000080">0</text></g>
<path d="M195.10 184.86L181.00 160.44M394.12 187.99L408.98 164.02M469.32 274.49L495.12 263.11M482.34 316.22L510.03 310.91M477.33 409.36L504.30 417.61M400.37 513.37L416.14 536.75M382.98 523.82L396.22 548.71M249.39 541.76L243.19 569.27M223.18 533.87L213.17 560.23M191.03 518.12L176.34 542.19M107.90 413.23L81.11 422.04M486 353.8H509.5L513 360.8M179.4 538.8L189.1 547.8M486 364.2L509.5 365.2L512.2 380M101.8 393.3L76.3 397.4M102.3 396.3L76.8 400.4M78.6 395.5L72.5 379.8" stroke="#000080" stroke-width="1" fill="none"/>
<g transform="translate(177.60,157.00) scale(1.0)" fill="none" stroke="#107010" stroke-width="1.75" stroke-linecap="round"><circle cx="0" cy="-2.3" r="3.6"/><path d="M0 1.3V6.5M-3 4H3"/></g>
<g transform="translate(415.00,160.50) scale(1.0)" fill="none" stroke="#7a10e8" stroke-width="1.75" stroke-linecap="round"><path d="M-5.8 -6Q-1.5 -7.5 -1.5 -3.5Q-1.5 -1 -4.8 2H5.8M1 -2.5V6.3"/></g>
<g transform="translate(502.70,262.30) scale(1.0)" fill="none" stroke="#901010" stroke-width="1.75" stroke-linecap="round"><circle cx="0" cy="-3.6" r="2.2"/><path d="M-4.5 -5.5A4.5 4.5 0 0 0 4.5 -5.5M0 -1V6M-3 3.2H3"/></g>
<g transform="translate(518.40,311.50) scale(1.0)" fill="none" stroke="#1010e0" stroke-width="1.75" stroke-linecap="round"><path d="M-3 -6.5A3 2.5 0 0 0 3 -6.5"/><circle cx="0" cy="-1.5" r="2.8"/><path d="M0 1.3V6.5M-2.5 4H2.5"/></g>
<g transform="translate(515,370.4) scale(0.6,1)"><text x="0" y="0" font-family="Liberation Sans" font-size="18.7" fill="#000" stroke="#000" stroke-width="0.22" text-anchor="start" style="white-space:pre" >Mc</text></g>
<g transform="translate(521.00,383.50) scale(1.0)" fill="none" stroke="#108070" stroke-width="1.75" stroke-linecap="round"><path d="M-5 -6Q-5 1.5 0 1.5Q5 1.5 5 -6M0 -6.5V6.5M-3 4H3"/></g>
<g transform="translate(512.80,424.00) scale(1.0)" fill="none" stroke="#2058b0" stroke-width="1.75" stroke-linecap="round"><path d="M-6.5 -4.7H3.5M-2 -7.5V2.5M-2 -0.5Q1 -3.5 4 -2Q6 0 3 3.5Q1.5 5.5 3.5 6.5L6 6.5"/></g>
<g transform="translate(420.70,546.00) scale(1.0)" fill="none" stroke="#e06010" stroke-width="1.75" stroke-linecap="round"><circle cx="0" cy="0" r="5.3"/><circle cx="0" cy="0" r="1.4" fill="#e06010" stroke="none"/></g>
<g transform="translate(393.6,565.5) scale(0.615,1)"><text x="0" y="0" font-family="Liberation Sans" font-size="18.7" fill="#000" stroke="#000" stroke-width="0.22" text-anchor="start" style="white-space:pre" >As</text></g>
<g transform="translate(209.00,570.00) scale(1.0)" fill="none" stroke="#3838f0" stroke-width="1.75" stroke-linecap="round"><path d="M-4.5 -5.5Q-2.5 -2 -4.5 1M4.5 -5.5Q2.5 -2 4.5 1M-3.5 -2H3.5M0 -6V2.5"/><circle cx="0" cy="4.5" r="1.9"/></g>
<g transform="translate(239.70,579.70) scale(1.0)" fill="none" stroke="#000" stroke-width="1.75" stroke-linecap="round"><path d="M-1 -6.5V2M-1 -1.5L3.5 -5.5M-1 -1.5L3.5 1.2"/><ellipse cx="0" cy="4.5" rx="3" ry="2"/></g>
<g transform="translate(169.50,551.50) scale(1.0)" fill="none" stroke="#000" stroke-width="1.75" stroke-linecap="round"><path d="M-2.5 4Q-6 0 -5 -3Q-3 -7.5 0 -7.5Q3 -7.5 5 -3Q6 0 2.5 4"/><circle cx="-3.8" cy="5" r="1.6"/><circle cx="3.8" cy="5" r="1.6"/></g>
<g transform="translate(185.00,556.50) scale(1.0)" fill="none" stroke="#000" stroke-width="1.75" stroke-linecap="round"><path d="M-2.5 -4Q-6 0 -5 3Q-3 7.5 0 7.5Q3 7.5 5 3Q6 0 2.5 -4"/><circle cx="-3.8" cy="-5" r="1.6"/><circle cx="3.8" cy="-5" r="1.6"/></g>
<g transform="translate(73.50,427.00) scale(1.0)" fill="none" stroke="#f07010" stroke-width="1.75" stroke-linecap="round"><path d="M-2.5 -6.8A6.8 6.8 0 0 1 -2.5 6.8A9.5 9.5 0 0 0 -2.5 -6.8Z" fill="#f07010" stroke-width="0.8"/></g>
<g transform="translate(67.00,403.40) scale(1.0)" fill="none" stroke="#000" stroke-width="1.75" stroke-linecap="round"><circle cx="0" cy="0" r="5.5"/><path d="M-3.8 -3.8L3.8 3.8M3.8 -3.8L-3.8 3.8"/></g>
<g transform="translate(63.60,383.20) scale(1.0)" fill="none" stroke="#e01010" stroke-width="1.75" stroke-linecap="round"><circle cx="-1.5" cy="1.5" r="3.8"/><path d="M1.2 -1.2L5.5 -5.5M1.5 -5.5H5.5V-1.5"/></g>
<line x1="123" y1="267.6" x2="440" y2="424" stroke="#000080" stroke-width="1.1"/>
<path d="M438.5 419.3 L433.2 428.3 L461.6 437.6 Z" fill="#000080"/>
<line x1="198.7" y1="189.2" x2="106.7" y2="391.3" stroke="#ff5050" stroke-width="0.85" stroke-opacity="0.9"/>
<line x1="395.4" y1="188.6" x2="222.8" y2="527.4" stroke="#ff5050" stroke-width="0.85" stroke-opacity="0.9"/>
<line x1="478" y1="316" x2="382.5" y2="518.3" stroke="#ff5050" stroke-width="0.85" stroke-opacity="0.9"/>
<line x1="478" y1="316" x2="397.5" y2="509.2" stroke="#ff5050" stroke-width="0.85" stroke-opacity="0.9"/>
<line x1="480.6" y1="354.5" x2="397.5" y2="509.2" stroke="#ff5050" stroke-width="0.85" stroke-opacity="0.9"/>
<line x1="480.6" y1="364.4" x2="397.5" y2="509.2" stroke="#ff5050" stroke-width="0.85" stroke-opacity="0.9"/>
<g transform="translate(687,115.6) scale(0.9803,1)"><text x="0" y="0" font-family="Liberation Sans" font-size="12" fill="#1a1a8a" stroke="#1a1a8a" stroke-width="0.22" text-anchor="end" textLength="161.48" lengthAdjust="spacing" style="white-space:pre" >90 Degree Dial NATAL CHART</text></g>
<text x="687" y="140.8" font-family="Liberation Sans" font-size="12.5" fill="#1a1a8a" font-weight="bold" stroke="#1a1a8a" stroke-width="0.22" text-anchor="end" textLength="103.70" lengthAdjust="spacing" style="white-space:pre" >Abraham Lincoln</text>
<g transform="translate(687,153.2) scale(0.9785,1)"><text x="0" y="0" font-family="Liberation Sans" font-size="12" fill="#1a1a8a" stroke="#1a1a8a" stroke-width="0.22" text-anchor="end" textLength="95.96" lengthAdjust="spacing" style="white-space:pre" >February 12, 1809</text></g>
<g transform="translate(687,164.1) scale(0.9809,1)"><text x="0" y="0" font-family="Liberation Sans" font-size="12" fill="#1a1a8a" stroke="#1a1a8a" stroke-width="0.22" text-anchor="end" textLength="43.84" lengthAdjust="spacing" style="white-space:pre" >6:54 AM</text></g>
<g transform="translate(687,175) scale(0.9802,1)"><text x="0" y="0" font-family="Liberation Sans" font-size="12" fill="#1a1a8a" stroke="#1a1a8a" stroke-width="0.22" text-anchor="end" textLength="89.78" lengthAdjust="spacing" style="white-space:pre" >Local Mean Time</text></g>
<g transform="translate(687,184.8) scale(0.9799,1)"><text x="0" y="0" font-family="Liberation Sans" font-size="12" fill="#1a1a8a" stroke="#1a1a8a" stroke-width="0.22" text-anchor="end" textLength="116.34" lengthAdjust="spacing" style="white-space:pre" >Hodgenville, Kentucky</text></g>
<g transform="translate(687,195.6) scale(0.9877,1)"><text x="0" y="0" font-family="Liberation Sans" font-size="12" fill="#1a1a8a" stroke="#1a1a8a" stroke-width="0.22" text-anchor="end" textLength="98.82" lengthAdjust="spacing" style="white-space:pre" >37 N 34    85 W 44</text></g>
<g transform="translate(687,206.4) scale(0.9844,1)"><text x="0" y="0" font-family="Liberation Sans" font-size="12" fill="#1a1a8a" stroke="#1a1a8a" stroke-width="0.22" text-anchor="end" textLength="131.96" lengthAdjust="spacing" style="white-space:pre" >Time Zone: 0 hours West</text></g>
<g transform="translate(687,217.2) scale(0.9754,1)"><text x="0" y="0" font-family="Liberation Sans" font-size="12" fill="#1a1a8a" stroke="#1a1a8a" stroke-width="0.22" text-anchor="end" textLength="56.60" lengthAdjust="spacing" style="white-space:pre" >Geocentric</text></g>
<g transform="translate(687,228) scale(0.9646,1)"><text x="0" y="0" font-family="Liberation Sans" font-size="12" fill="#1a1a8a" stroke="#1a1a8a" stroke-width="0.22" text-anchor="end" textLength="40.74" lengthAdjust="spacing" style="white-space:pre" >Tropical</text></g>
<g transform="translate(687.6,551.5) scale(0.9797,1)"><text x="0" y="0" font-family="Liberation Sans" font-size="10" fill="#1a1a8a" stroke="#1a1a8a" stroke-width="0.22" text-anchor="end" textLength="93.30" lengthAdjust="spacing" style="white-space:pre" >Your Company Name</text></g>
<g transform="translate(687.6,565.6) scale(0.9821,1)"><text x="0" y="0" font-family="Liberation Sans" font-size="10" fill="#1a1a8a" stroke="#1a1a8a" stroke-width="0.22" text-anchor="end" textLength="76.26" lengthAdjust="spacing" style="white-space:pre" >18 Maple Avenue</text></g>
<g transform="translate(687.6,580.1) scale(0.9752,1)"><text x="0" y="0" font-family="Liberation Sans" font-size="10" fill="#1a1a8a" stroke="#1a1a8a" stroke-width="0.22" text-anchor="end" textLength="123.05" lengthAdjust="spacing" style="white-space:pre" >Nice Place, California 98765</text></g>
<g transform="translate(687.6,594.2) scale(0.9799,1)"><text x="0" y="0" font-family="Liberation Sans" font-size="10" fill="#1a1a8a" stroke="#1a1a8a" stroke-width="0.22" text-anchor="end" textLength="94.80" lengthAdjust="spacing" style="white-space:pre" >Phone: 123-456-7890</text></g>
<rect x="248" y="176.5" width="85" height="17.5" fill="#e4ecf2"/>
<rect x="251.5" y="179" width="13" height="13.5" fill="#f2eedc"/><path d="M252.0 192.5V179.5H264.5" stroke="#fff" stroke-width="1" fill="none"/><path d="M252.5 191.75H263.75V179.5" stroke="#101010" stroke-width="1.5" fill="none"/>
<path d="M255.8 185.5L260.3 182V189Z" fill="#101010"/>
<rect x="268.5" y="179" width="13" height="13.5" fill="#f2eedc"/><path d="M269.0 192.5V179.5H281.5" stroke="#fff" stroke-width="1" fill="none"/><path d="M269.5 191.75H280.75V179.5" stroke="#101010" stroke-width="1.5" fill="none"/>
<path d="M276.2 185.5L271.7 182V189Z" fill="#101010"/>
<rect x="287" y="179" width="42.7" height="13.5" fill="#f8f8f8"/><path d="M287.5 192.5V179.5H329.7" stroke="#fff" stroke-width="1" fill="none"/><path d="M288 191.75H328.95V179.5" stroke="#101010" stroke-width="1.5" fill="none"/>
<g transform="translate(289.6,188.8) scale(0.9842,1)"><text x="0" y="0" font-family="Liberation Sans" font-size="10" fill="#000" stroke="#000" stroke-width="0.22" text-anchor="start" textLength="35.56" lengthAdjust="spacing" style="white-space:pre" >Settings</text></g>
<g transform="translate(278.8,207.4) scale(0.9847,1)"><text x="0" y="0" font-family="Liberation Sans" font-size="10" fill="#000" stroke="#000" stroke-width="0.22" text-anchor="start" textLength="27.72" lengthAdjust="spacing" style="white-space:pre" >60°53'</text></g>
<path d="M266.5 212.5V286" stroke="#000" stroke-width="1"/>
<path d="M263.5 218.4H268.5" stroke="#000" stroke-width="1"/>
<g transform="translate(256.70,218.30) scale(0.6)" fill="none" stroke="#000" stroke-width="1.75" stroke-linecap="round"><circle cx="0" cy="0" r="5.3"/><circle cx="0" cy="0" r="1.4" fill="#000" stroke="none"/></g>
<g transform="translate(273.30,218.30) scale(0.6)" fill="none" stroke="#000" stroke-width="1.75" stroke-linecap="round"><path d="M-3 -6.5A3 2.5 0 0 0 3 -6.5"/><circle cx="0" cy="-1.5" r="2.8"/><path d="M0 1.3V6.5M-2.5 4H2.5"/></g>
<g transform="translate(283.8,221.6) scale(0.9865,1)"><text x="0" y="0" font-family="Liberation Sans" font-size="9.7" fill="#000" stroke="#000" stroke-width="0.22" text-anchor="start" textLength="21.59" lengthAdjust="spacing" style="white-space:pre" >1°00'</text></g>
<text x="320.3" y="221.6" font-family="Liberation Sans" font-size="9.7" fill="#000" stroke="#000" stroke-width="0.22" text-anchor="end" style="white-space:pre" >1</text>
<g transform="translate(329.8,221.6) scale(0.9240,1)"><text x="0" y="0" font-family="Liberation Sans" font-size="9.7" fill="#000" stroke="#000" stroke-width="0.22" text-anchor="start" textLength="9.96" lengthAdjust="spacing" style="white-space:pre" >52</text></g>
<path d="M320.7 214.79999999999998Q323.7 218.2 320.7 221.6M327.7 214.79999999999998Q324.7 218.2 327.7 221.6M321.2 218.2H327.2" stroke="#000" stroke-width="1" fill="none"/>
<path d="M263.5 230.8H268.5" stroke="#000" stroke-width="1"/>
<g transform="translate(256.70,230.70) scale(0.6)" fill="none" stroke="#000" stroke-width="1.75" stroke-linecap="round"><path d="M-3 -6.5A3 2.5 0 0 0 3 -6.5"/><circle cx="0" cy="-1.5" r="2.8"/><path d="M0 1.3V6.5M-2.5 4H2.5"/></g>
<g transform="translate(269.4,234.0) scale(0.7,1)"><text x="0" y="0" font-family="Liberation Sans" font-size="10.5" fill="#000" stroke="#000" stroke-width="0.22" text-anchor="start" style="white-space:pre" >As</text></g>
<g transform="translate(283.8,234.0) scale(0.9865,1)"><text x="0" y="0" font-family="Liberation Sans" font-size="9.7" fill="#000" stroke="#000" stroke-width="0.22" text-anchor="start" textLength="21.59" lengthAdjust="spacing" style="white-space:pre" >0°18'</text></g>
<text x="320.3" y="234.0" font-family="Liberation Sans" font-size="9.7" fill="#000" stroke="#000" stroke-width="0.22" text-anchor="end" style="white-space:pre" >1</text>
<g transform="translate(329.8,234.0) scale(0.9565,1)"><text x="0" y="0" font-family="Liberation Sans" font-size="9.7" fill="#000" stroke="#000" stroke-width="0.22" text-anchor="start" textLength="9.62" lengthAdjust="spacing" style="white-space:pre" >11</text></g>
<path d="M320.7 227.2Q323.7 230.6 320.7 234.0M327.7 227.2Q324.7 230.6 327.7 234.0M321.2 230.6H327.2" stroke="#000" stroke-width="1" fill="none"/>
<path d="M263.5 243.20000000000002H268.5" stroke="#b06018" stroke-width="1"/>
<g transform="translate(256.70,243.10) scale(0.6)" fill="none" stroke="#b06018" stroke-width="1.75" stroke-linecap="round"><circle cx="0" cy="0" r="5.3"/><circle cx="0" cy="0" r="1.4" fill="#b06018" stroke="none"/></g>
<g transform="translate(273.30,243.10) scale(0.6)" fill="none" stroke="#b06018" stroke-width="1.75" stroke-linecap="round"><path d="M-5 -6Q-5 1.5 0 1.5Q5 1.5 5 -6M0 -6.5V6.5M-3 4H3"/></g>
<g transform="translate(283.8,246.4) scale(0.9865,1)"><text x="0" y="0" font-family="Liberation Sans" font-size="9.7" fill="#b06018" stroke="#b06018" stroke-width="0.22" text-anchor="start" textLength="21.59" lengthAdjust="spacing" style="white-space:pre" >0°49'</text></g>
<text x="320.3" y="246.4" font-family="Liberation Sans" font-size="9.7" fill="#b06018" stroke="#b06018" stroke-width="0.22" text-anchor="end" style="white-space:pre" >15</text>
<g transform="translate(329.8,246.4) scale(0.9240,1)"><text x="0" y="0" font-family="Liberation Sans" font-size="9.7" fill="#b06018" stroke="#b06018" stroke-width="0.22" text-anchor="start" textLength="9.96" lengthAdjust="spacing" style="white-space:pre" >04</text></g>
<path d="M320.2 239.9L322.7 246.4L325.2 240.9Q327.7 239.4 327.7 243.4Q327.2 246.4 325.7 245.4" stroke="#b06018" stroke-width="1" fill="none"/>
<path d="M263.5 255.60000000000002H268.5" stroke="#b06018" stroke-width="1"/>
<g transform="translate(256.70,255.50) scale(0.6)" fill="none" stroke="#b06018" stroke-width="1.75" stroke-linecap="round"><circle cx="0" cy="0" r="5.3"/><circle cx="0" cy="0" r="1.4" fill="#b06018" stroke="none"/></g>
<g transform="translate(269.4,258.8) scale(0.7,1)"><text x="0" y="0" font-family="Liberation Sans" font-size="10.5" fill="#b06018" stroke="#b06018" stroke-width="0.22" text-anchor="start" style="white-space:pre" >Mc</text></g>
<g transform="translate(283.8,258.8) scale(0.9865,1)"><text x="0" y="0" font-family="Liberation Sans" font-size="9.7" fill="#b06018" stroke="#b06018" stroke-width="0.22" text-anchor="start" textLength="21.59" lengthAdjust="spacing" style="white-space:pre" >0°26'</text></g>
<text x="320.3" y="258.8" font-family="Liberation Sans" font-size="9.7" fill="#b06018" stroke="#b06018" stroke-width="0.22" text-anchor="end" style="white-space:pre" >15</text>
<g transform="translate(329.8,258.8) scale(0.9240,1)"><text x="0" y="0" font-family="Liberation Sans" font-size="9.7" fill="#b06018" stroke="#b06018" stroke-width="0.22" text-anchor="start" textLength="9.96" lengthAdjust="spacing" style="white-space:pre" >27</text></g>
<path d="M320.2 252.3L322.7 258.8L325.2 253.3Q327.7 251.8 327.7 255.8Q327.2 258.8 325.7 257.8" stroke="#b06018" stroke-width="1" fill="none"/>
<path d="M263.5 268.0H268.5" stroke="#b06018" stroke-width="1"/>
<g transform="translate(256.70,267.90) scale(0.6)" fill="none" stroke="#b06018" stroke-width="1.75" stroke-linecap="round"><circle cx="0" cy="-2.3" r="3.6"/><path d="M0 1.3V6.5M-3 4H3"/></g>
<g transform="translate(273.30,267.90) scale(0.6)" fill="none" stroke="#b06018" stroke-width="1.75" stroke-linecap="round"><circle cx="-1.5" cy="1.5" r="3.8"/><path d="M1.2 -1.2L5.5 -5.5M1.5 -5.5H5.5V-1.5"/></g>
<g transform="translate(283.8,271.2) scale(0.9865,1)"><text x="0" y="0" font-family="Liberation Sans" font-size="9.7" fill="#b06018" stroke="#b06018" stroke-width="0.22" text-anchor="start" textLength="21.59" lengthAdjust="spacing" style="white-space:pre" >0°35'</text></g>
<text x="320.3" y="271.2" font-family="Liberation Sans" font-size="9.7" fill="#b06018" stroke="#b06018" stroke-width="0.22" text-anchor="end" style="white-space:pre" >16</text>
<g transform="translate(329.8,271.2) scale(0.9240,1)"><text x="0" y="0" font-family="Liberation Sans" font-size="9.7" fill="#b06018" stroke="#b06018" stroke-width="0.22" text-anchor="start" textLength="9.96" lengthAdjust="spacing" style="white-space:pre" >28</text></g>
<path d="M320.2 264.7L322.7 271.2L325.2 265.7Q327.7 264.2 327.7 268.2Q327.2 271.2 325.7 270.2" stroke="#b06018" stroke-width="1" fill="none"/>
<path d="M263.5 280.40000000000003H268.5" stroke="#b06018" stroke-width="1"/>
<g transform="translate(256.70,280.30) scale(0.6)" fill="none" stroke="#b06018" stroke-width="1.75" stroke-linecap="round"><path d="M-5.8 -6Q-1.5 -7.5 -1.5 -3.5Q-1.5 -1 -4.8 2H5.8M1 -2.5V6.3"/></g>
<g transform="translate(273.30,280.30) scale(0.6)" fill="none" stroke="#b06018" stroke-width="1.75" stroke-linecap="round"><path d="M-4.5 -5.5Q-2.5 -2 -4.5 1M4.5 -5.5Q2.5 -2 4.5 1M-3.5 -2H3.5M0 -6V2.5"/><circle cx="0" cy="4.5" r="1.9"/></g>
<g transform="translate(283.8,283.6) scale(0.9865,1)"><text x="0" y="0" font-family="Liberation Sans" font-size="9.7" fill="#b06018" stroke="#b06018" stroke-width="0.22" text-anchor="start" textLength="21.59" lengthAdjust="spacing" style="white-space:pre" >0°01'</text></g>
<text x="320.3" y="283.6" font-family="Liberation Sans" font-size="9.7" fill="#b06018" stroke="#b06018" stroke-width="0.22" text-anchor="end" style="white-space:pre" >15</text>
<g transform="translate(329.8,283.6) scale(0.9240,1)"><text x="0" y="0" font-family="Liberation Sans" font-size="9.7" fill="#b06018" stroke="#b06018" stroke-width="0.22" text-anchor="start" textLength="9.96" lengthAdjust="spacing" style="white-space:pre" >52</text></g>
<path d="M320.2 277.1L322.7 283.6L325.2 278.1Q327.7 276.6 327.7 280.6Q327.2 283.6 325.7 282.6" stroke="#b06018" stroke-width="1" fill="none"/>
</g>
<rect x="690.5" y="54.5" width="206" height="564.5" fill="#fff" stroke="#46505a" stroke-width="1"/>
<circle cx="700.7" cy="65.5" r="6.5" fill="url(#gIcon)" stroke="#1a0010" stroke-width="1.1"/><path d="M697.7 69.5L704.7 62.0" stroke="#ff5020" stroke-width="1.6"/><path d="M699.2 70.5L705.2 64.5" stroke="#ff40ff" stroke-width="1"/><ellipse cx="700.2" cy="61.7" rx="2" ry="1.3" fill="#fff" opacity="0.85"/>
<g transform="translate(713,69.2) scale(0.9425,1)"><text x="0" y="0" font-family="Liberation Sans" font-size="11.5" fill="#000" stroke="#000" stroke-width="0.22" text-anchor="start" textLength="57.83" lengthAdjust="spacing" style="white-space:pre" >Wheel Style</text></g>
<path d="M878 61.2L887 70.2M887 61.2L878 70.2" stroke="#000" stroke-width="1"/>
<rect x="691" y="77" width="205" height="542" fill="#c1ddfb"/>
<rect x="691" y="77" width="205" height="1.6" fill="#101010"/>
<rect x="691" y="77" width="1.3" height="542" fill="#101010"/>
<rect x="895" y="77" width="1.3" height="542" fill="#101010"/>
<rect x="894" y="78.6" width="1" height="540" fill="#f4f8fc"/>
<rect x="692.3" y="78.6" width="1" height="539" fill="#f4f8fc"/>
<rect x="692" y="617" width="203" height="1" fill="#f4f8fc"/>
<rect x="691" y="618" width="205" height="1.2" fill="#606060"/>
<rect x="692.3" y="78.6" width="194" height="2" fill="#d4f0fc"/>
<rect x="692.3" y="80.6" width="194" height="19.5" fill="#e2eefb"/>
<rect x="695" y="99.5" width="191" height="273.5" fill="#e3effb"/>
<path d="M695.5 372.5V100H885" stroke="#ffffff" stroke-width="1" fill="none"/>
<path d="M695 372.5H886V99.5" stroke="#504848" stroke-width="1.5" fill="none"/>
<rect x="749.5" y="84" width="38" height="15.5" fill="#eceef2"/>
<path d="M749.5 99.5V84.5H786" stroke="#fff" stroke-width="1" fill="none"/><path d="M786.8 85V99.5" stroke="#262626" stroke-width="1.3"/>
<rect x="788.5" y="84" width="52" height="15.5" fill="#eceef2"/>
<path d="M788.5 99.5V84.5H840" stroke="#fff" stroke-width="1" fill="none"/><path d="M840.6 85V99.5" stroke="#262626" stroke-width="1.3"/>
<rect x="696" y="82" width="52.5" height="18.5" fill="#edf0f3"/>
<path d="M696.5 100.5V82.5H747" stroke="#fff" stroke-width="1" fill="none"/><path d="M748.2 83V100" stroke="#1e1e1e" stroke-width="1.4"/>
<g transform="translate(702,93.8) scale(0.9346,1)"><text x="0" y="0" font-family="Liberation Sans" font-size="11" fill="#000" stroke="#000" stroke-width="0.22" text-anchor="start" textLength="41.73" lengthAdjust="spacing" style="white-space:pre" >Standard</text></g>
<g transform="translate(752.4,94.7) scale(0.9164,1)"><text x="0" y="0" font-family="Liberation Sans" font-size="11" fill="#000" stroke="#000" stroke-width="0.22" text-anchor="start" textLength="33.06" lengthAdjust="spacing" style="white-space:pre" >Special</text></g>
<g transform="translate(792.9,94.7) scale(0.9323,1)"><text x="0" y="0" font-family="Liberation Sans" font-size="11" fill="#000" stroke="#000" stroke-width="0.22" text-anchor="start" textLength="45.59" lengthAdjust="spacing" style="white-space:pre" >My Wheel</text></g>
<rect x="702.1" y="109.1" width="169.89999999999998" height="254.4" fill="none" stroke="#fff" stroke-width="1"/><rect x="701.1" y="108.1" width="169.89999999999998" height="254.4" fill="none" stroke="#a0a0a0" stroke-width="1"/>
<rect x="706" y="104" width="71" height="9" fill="#e3effb"/>
<g transform="translate(707.8,112.8) scale(0.9359,1)"><text x="0" y="0" font-family="Liberation Sans" font-size="11" fill="#000" stroke="#000" stroke-width="0.22" text-anchor="start" textLength="72.66" lengthAdjust="spacing" style="white-space:pre" >Wheel size, etc.</text></g>
<circle cx="714.3" cy="123.6" r="4.9" fill="#fbfbfb"/><path d="M717.76 120.14A4.9 4.9 0 0 0 710.84 127.06" stroke="#646464" stroke-width="1.3" fill="none"/><path d="M717.76 120.14A4.9 4.9 0 0 1 710.84 127.06" stroke="#e4e4e4" stroke-width="1" fill="none"/>
<g transform="translate(724.2,127.3) scale(0.9368,1)"><text x="0" y="0" font-family="Liberation Sans" font-size="11" fill="#000" stroke="#000" stroke-width="0.22" text-anchor="start" textLength="107.39" lengthAdjust="spacing" style="white-space:pre" >A=Small, Big asp. grid I</text></g>
<rect x="724.2" y="128.2" width="7.0" height="1" fill="#000"/>
<circle cx="714.3" cy="138.86" r="4.9" fill="#fbfbfb"/><path d="M717.76 135.40A4.9 4.9 0 0 0 710.84 142.32" stroke="#646464" stroke-width="1.3" fill="none"/><path d="M717.76 135.40A4.9 4.9 0 0 1 710.84 142.32" stroke="#e4e4e4" stroke-width="1" fill="none"/>
<g transform="translate(724.2,142.56) scale(0.9215,1)"><text x="0" y="0" font-family="Liberation Sans" font-size="11" fill="#000" stroke="#000" stroke-width="0.22" text-anchor="start" textLength="110.69" lengthAdjust="spacing" style="white-space:pre" >B=Small, Small asp. grid</text></g>
<rect x="724.2" y="143.46" width="7.0" height="1" fill="#000"/>
<circle cx="714.3" cy="154.12" r="4.9" fill="#fbfbfb"/><path d="M717.76 150.66A4.9 4.9 0 0 0 710.84 157.58" stroke="#646464" stroke-width="1.3" fill="none"/><path d="M717.76 150.66A4.9 4.9 0 0 1 710.84 157.58" stroke="#e4e4e4" stroke-width="1" fill="none"/>
<g transform="translate(724.2,157.82) scale(0.9268,1)"><text x="0" y="0" font-family="Liberation Sans" font-size="11" fill="#000" stroke="#000" stroke-width="0.22" text-anchor="start" textLength="86.97" lengthAdjust="spacing" style="white-space:pre" >C=Small, Technical</text></g>
<rect x="724.2" y="158.72" width="7.0" height="1" fill="#000"/>
<circle cx="714.3" cy="169.38" r="4.9" fill="#fbfbfb"/><path d="M717.76 165.92A4.9 4.9 0 0 0 710.84 172.84" stroke="#646464" stroke-width="1.3" fill="none"/><path d="M717.76 165.92A4.9 4.9 0 0 1 710.84 172.84" stroke="#e4e4e4" stroke-width="1" fill="none"/>
<g transform="translate(724.2,173.08) scale(0.9376,1)"><text x="0" y="0" font-family="Liberation Sans" font-size="11" fill="#000" stroke="#000" stroke-width="0.22" text-anchor="start" textLength="110.92" lengthAdjust="spacing" style="white-space:pre" >D=Small, Big asp. grid II</text></g>
<rect x="724.2" y="173.98" width="7.0" height="1" fill="#000"/>
<circle cx="714.3" cy="184.64" r="4.9" fill="#fbfbfb"/><path d="M717.76 181.18A4.9 4.9 0 0 0 710.84 188.10" stroke="#646464" stroke-width="1.3" fill="none"/><path d="M717.76 181.18A4.9 4.9 0 0 1 710.84 188.10" stroke="#e4e4e4" stroke-width="1" fill="none"/>
<g transform="translate(724.2,188.34) scale(0.9388,1)"><text x="0" y="0" font-family="Liberation Sans" font-size="11" fill="#000" stroke="#000" stroke-width="0.22" text-anchor="start" textLength="104.17" lengthAdjust="spacing" style="white-space:pre" >E=Medium, Med. grid I</text></g>
<rect x="724.2" y="189.24" width="6.0" height="1" fill="#000"/>
<circle cx="714.3" cy="199.9" r="4.9" fill="#fbfbfb"/><path d="M717.76 196.44A4.9 4.9 0 0 0 710.84 203.36" stroke="#646464" stroke-width="1.3" fill="none"/><path d="M717.76 196.44A4.9 4.9 0 0 1 710.84 203.36" stroke="#e4e4e4" stroke-width="1" fill="none"/>
<g transform="translate(724.2,203.6) scale(0.9312,1)"><text x="0" y="0" font-family="Liberation Sans" font-size="11" fill="#000" stroke="#000" stroke-width="0.22" text-anchor="start" textLength="105.02" lengthAdjust="spacing" style="white-space:pre" >F=Medium, Grid,  Expl.</text></g>
<rect x="724.2" y="204.5" width="6.0" height="1" fill="#000"/>
<circle cx="714.3" cy="215.16" r="4.9" fill="#fbfbfb"/><path d="M717.76 211.70A4.9 4.9 0 0 0 710.84 218.62" stroke="#646464" stroke-width="1.3" fill="none"/><path d="M717.76 211.70A4.9 4.9 0 0 1 710.84 218.62" stroke="#e4e4e4" stroke-width="1" fill="none"/>
<g transform="translate(724.2,218.86) scale(0.9309,1)"><text x="0" y="0" font-family="Liberation Sans" font-size="11" fill="#000" stroke="#000" stroke-width="0.22" text-anchor="start" textLength="117.52" lengthAdjust="spacing" style="white-space:pre" >G=Medium, No grid, Expl.</text></g>
<rect x="724.2" y="219.76" width="7.0" height="1" fill="#000"/>
<circle cx="714.3" cy="230.42" r="4.9" fill="#fbfbfb"/><path d="M717.76 226.96A4.9 4.9 0 0 0 710.84 233.88" stroke="#646464" stroke-width="1.3" fill="none"/><path d="M717.76 226.96A4.9 4.9 0 0 1 710.84 233.88" stroke="#e4e4e4" stroke-width="1" fill="none"/>
<g transform="translate(724.2,234.12) scale(0.9325,1)"><text x="0" y="0" font-family="Liberation Sans" font-size="11" fill="#000" stroke="#000" stroke-width="0.22" text-anchor="start" textLength="112.60" lengthAdjust="spacing" style="white-space:pre" >H=Big, Medium asp. grid</text></g>
<rect x="724.2" y="235.02" width="7.0" height="1" fill="#000"/>
<circle cx="714.3" cy="245.68" r="4.9" fill="#fbfbfb"/><path d="M717.76 242.22A4.9 4.9 0 0 0 710.84 249.14" stroke="#646464" stroke-width="1.3" fill="none"/><path d="M717.76 242.22A4.9 4.9 0 0 1 710.84 249.14" stroke="#e4e4e4" stroke-width="1" fill="none"/>
<g transform="translate(724.2,249.38) scale(0.9360,1)"><text x="0" y="0" font-family="Liberation Sans" font-size="11" fill="#000" stroke="#000" stroke-width="0.22" text-anchor="start" textLength="100.43" lengthAdjust="spacing" style="white-space:pre" > I=Big, Small asp. grid</text></g>
<rect x="726.9000000000001" y="250.28" width="3.0" height="1" fill="#000"/>
<circle cx="714.3" cy="260.94" r="4.9" fill="#fbfbfb"/><path d="M717.76 257.48A4.9 4.9 0 0 0 710.84 264.40" stroke="#646464" stroke-width="1.3" fill="none"/><path d="M717.76 257.48A4.9 4.9 0 0 1 710.84 264.40" stroke="#e4e4e4" stroke-width="1" fill="none"/>
<g transform="translate(724.2,264.64) scale(0.9404,1)"><text x="0" y="0" font-family="Liberation Sans" font-size="11" fill="#000" stroke="#000" stroke-width="0.22" text-anchor="start" textLength="82.52" lengthAdjust="spacing" style="white-space:pre" >J=Big, Expl. Table</text></g>
<rect x="724.2" y="265.54" width="4.0" height="1" fill="#000"/>
<circle cx="714.3" cy="276.2" r="4.9" fill="#fbfbfb"/><path d="M717.76 272.74A4.9 4.9 0 0 0 710.84 279.66" stroke="#646464" stroke-width="1.3" fill="none"/><path d="M717.76 272.74A4.9 4.9 0 0 1 710.84 279.66" stroke="#e4e4e4" stroke-width="1" fill="none"/>
<g transform="translate(724.2,279.9) scale(0.9357,1)"><text x="0" y="0" font-family="Liberation Sans" font-size="11" fill="#000" stroke="#000" stroke-width="0.22" text-anchor="start" textLength="109.01" lengthAdjust="spacing" style="white-space:pre" >K=Big, Large inner area</text></g>
<rect x="724.2" y="280.8" width="7.0" height="1" fill="#000"/>
<circle cx="714.3" cy="291.46" r="4.9" fill="#fbfbfb"/><path d="M717.76 288.00A4.9 4.9 0 0 0 710.84 294.92" stroke="#646464" stroke-width="1.3" fill="none"/><path d="M717.76 288.00A4.9 4.9 0 0 1 710.84 294.92" stroke="#e4e4e4" stroke-width="1" fill="none"/>
<g transform="translate(724.2,295.16) scale(0.9324,1)"><text x="0" y="0" font-family="Liberation Sans" font-size="11" fill="#000" stroke="#000" stroke-width="0.22" text-anchor="start" textLength="85.80" lengthAdjust="spacing" style="white-space:pre" >L=Very big, Simple</text></g>
<rect x="724.2" y="296.06" width="6.0" height="1" fill="#000"/>
<circle cx="714.3" cy="306.72" r="4.9" fill="#fbfbfb"/><path d="M717.76 303.26A4.9 4.9 0 0 0 710.84 310.18" stroke="#646464" stroke-width="1.3" fill="none"/><path d="M717.76 303.26A4.9 4.9 0 0 1 710.84 310.18" stroke="#e4e4e4" stroke-width="1" fill="none"/>
<g transform="translate(724.2,310.42) scale(0.9429,1)"><text x="0" y="0" font-family="Liberation Sans" font-size="11" fill="#000" stroke="#000" stroke-width="0.22" text-anchor="start" textLength="109.23" lengthAdjust="spacing" style="white-space:pre" >M=Medium, Med. grid II</text></g>
<rect x="724.2" y="311.32" width="8.0" height="1" fill="#000"/>
<circle cx="714.3" cy="321.98" r="4.9" fill="#fbfbfb"/><path d="M717.76 318.52A4.9 4.9 0 0 0 710.84 325.44" stroke="#646464" stroke-width="1.3" fill="none"/><path d="M717.76 318.52A4.9 4.9 0 0 1 710.84 325.44" stroke="#e4e4e4" stroke-width="1" fill="none"/><circle cx="714.3" cy="321.98" r="1.9" fill="#000"/>
<g transform="translate(724.2,325.68) scale(0.9399,1)"><text x="0" y="0" font-family="Liberation Sans" font-size="11" fill="#000" stroke="#000" stroke-width="0.22" text-anchor="start" textLength="96.82" lengthAdjust="spacing" style="white-space:pre" >N=Very big, Simple II</text></g>
<rect x="724.2" y="326.58" width="7.0" height="1" fill="#000"/>
<circle cx="714.3" cy="337.24" r="4.9" fill="#fbfbfb"/><path d="M717.76 333.78A4.9 4.9 0 0 0 710.84 340.70" stroke="#646464" stroke-width="1.3" fill="none"/><path d="M717.76 333.78A4.9 4.9 0 0 1 710.84 340.70" stroke="#e4e4e4" stroke-width="1" fill="none"/>
<g transform="translate(724.2,340.94) scale(0.9207,1)"><text x="0" y="0" font-family="Liberation Sans" font-size="11" fill="#000" stroke="#000" stroke-width="0.22" text-anchor="start" textLength="94.28" lengthAdjust="spacing" style="white-space:pre" >P=Big, Simple, Black</text></g>
<rect x="724.2" y="341.84" width="6.0" height="1" fill="#000"/>
<circle cx="714.3" cy="352.5" r="4.9" fill="#fbfbfb"/><path d="M717.76 349.04A4.9 4.9 0 0 0 710.84 355.96" stroke="#646464" stroke-width="1.3" fill="none"/><path d="M717.76 349.04A4.9 4.9 0 0 1 710.84 355.96" stroke="#e4e4e4" stroke-width="1" fill="none"/>
<g transform="translate(724.2,356.2) scale(0.9411,1)"><text x="0" y="0" font-family="Liberation Sans" font-size="11" fill="#000" stroke="#000" stroke-width="0.22" text-anchor="start" textLength="103.28" lengthAdjust="spacing" style="white-space:pre" >Q=Birth Data in Wheel</text></g>
<rect x="724.2" y="357.1" width="8.0" height="1" fill="#000"/>
<rect x="695.5" y="375" width="148" height="90" fill="#e0eefb"/>
<rect x="702.3" y="386.5" width="134.20000000000005" height="77.19999999999999" fill="none" stroke="#fff" stroke-width="1"/><rect x="701.3" y="385.5" width="134.20000000000005" height="77.19999999999999" fill="none" stroke="#a0a0a0" stroke-width="1"/>
<rect x="706" y="381" width="36" height="9" fill="#e0eefb"/>
<g transform="translate(707.9,390.3) scale(0.9520,1)"><text x="0" y="0" font-family="Liberation Sans" font-size="11" fill="#000" stroke="#000" stroke-width="0.22" text-anchor="start" textLength="34.35" lengthAdjust="spacing" style="white-space:pre" >Layout:</text></g>
<circle cx="714.3" cy="399.4" r="4.9" fill="#fbfbfb"/><path d="M717.76 395.94A4.9 4.9 0 0 0 710.84 402.86" stroke="#646464" stroke-width="1.3" fill="none"/><path d="M717.76 395.94A4.9 4.9 0 0 1 710.84 402.86" stroke="#e4e4e4" stroke-width="1" fill="none"/>
<g transform="translate(723.8,403.0) scale(0.9309,1)"><text x="0" y="0" font-family="Liberation Sans" font-size="11" fill="#000" stroke="#000" stroke-width="0.22" text-anchor="start" textLength="72.29" lengthAdjust="spacing" style="white-space:pre" >Equally spaced.</text></g>
<rect x="746.5" y="404.1" width="5.0" height="1" fill="#000"/>
<circle cx="714.3" cy="412.95" r="4.9" fill="#fbfbfb"/><path d="M717.76 409.49A4.9 4.9 0 0 0 710.84 416.41" stroke="#646464" stroke-width="1.3" fill="none"/><path d="M717.76 409.49A4.9 4.9 0 0 1 710.84 416.41" stroke="#e4e4e4" stroke-width="1" fill="none"/>
<g transform="translate(723.8,416.55) scale(0.9331,1)"><text x="0" y="0" font-family="Liberation Sans" font-size="11" fill="#000" stroke="#000" stroke-width="0.22" text-anchor="start" textLength="84.45" lengthAdjust="spacing" style="white-space:pre" >Unequally spaced.</text></g>
<rect x="723.8" y="417.65" width="6.7000000000000455" height="1" fill="#000"/>
<circle cx="714.3" cy="426.5" r="4.9" fill="#fbfbfb"/><path d="M717.76 423.04A4.9 4.9 0 0 0 710.84 429.96" stroke="#646464" stroke-width="1.3" fill="none"/><path d="M717.76 423.04A4.9 4.9 0 0 1 710.84 429.96" stroke="#e4e4e4" stroke-width="1" fill="none"/>
<g transform="translate(723.8,430.1) scale(0.9231,1)"><text x="0" y="0" font-family="Liberation Sans" font-size="11" fill="#000" stroke="#000" stroke-width="0.22" text-anchor="start" textLength="107.25" lengthAdjust="spacing" style="white-space:pre" >Unequal &amp; Zodiac signs</text></g>
<rect x="771.6" y="431.2" width="6.199999999999932" height="1" fill="#000"/>
<circle cx="714.3" cy="440.05" r="4.9" fill="#fbfbfb"/><path d="M717.76 436.59A4.9 4.9 0 0 0 710.84 443.51" stroke="#646464" stroke-width="1.3" fill="none"/><path d="M717.76 436.59A4.9 4.9 0 0 1 710.84 443.51" stroke="#e4e4e4" stroke-width="1" fill="none"/><circle cx="714.3" cy="440.05" r="1.9" fill="#000"/>
<g transform="translate(723.8,443.65) scale(0.9427,1)"><text x="0" y="0" font-family="Liberation Sans" font-size="11" fill="#000" stroke="#000" stroke-width="0.22" text-anchor="start" textLength="111.81" lengthAdjust="spacing" style="white-space:pre" >90 Deg Dial (Interactive)</text></g>
<rect x="723.8" y="444.75" width="5.7000000000000455" height="1" fill="#000"/>
<circle cx="714.3" cy="453.6" r="4.9" fill="#fbfbfb"/><path d="M717.76 450.14A4.9 4.9 0 0 0 710.84 457.06" stroke="#646464" stroke-width="1.3" fill="none"/><path d="M717.76 450.14A4.9 4.9 0 0 1 710.84 457.06" stroke="#e4e4e4" stroke-width="1" fill="none"/>
<g transform="translate(723.8,457.2) scale(0.9332,1)"><text x="0" y="0" font-family="Liberation Sans" font-size="11" fill="#000" stroke="#000" stroke-width="0.22" text-anchor="start" textLength="65.05" lengthAdjust="spacing" style="white-space:pre" >Square Wheel</text></g>
<rect x="723.8" y="458.3" width="6.0" height="1" fill="#000"/>
<rect x="722.5" y="434" width="108" height="12.4" fill="none" stroke="#000" stroke-width="0.8" stroke-dasharray="1 1"/>
<rect x="701.8" y="499.4" width="95" height="15.1" fill="#e0eefb"/>
<g transform="translate(703.3,510) scale(0.9433,1)"><text x="0" y="0" font-family="Liberation Sans" font-size="11" fill="#000" stroke="#000" stroke-width="0.22" text-anchor="start" textLength="95.73" lengthAdjust="spacing" style="white-space:pre" >Current Wheel Style:</text></g>
<rect x="799.5" y="499" width="37" height="16.5" fill="#fff" stroke="#404040" stroke-width="1"/>
<g transform="translate(800.8,510.5) scale(0.9201,1)"><text x="0" y="0" font-family="Liberation Sans" font-size="11" fill="#000" stroke="#000" stroke-width="0.22" text-anchor="start" textLength="16.30" lengthAdjust="spacing" style="white-space:pre" >IFD</text></g>
<rect x="698" y="532.2" width="134.79999999999995" height="18.199999999999932" fill="#efefef"/><path d="M698.5 549.9V532.7H832.3" stroke="#fff" stroke-width="1" fill="none"/><path d="M698.5 549.65H832.05V532.7" stroke="#404040" stroke-width="1.5" fill="none"/><path d="M699.5 548.4H830.8V533.7" stroke="#b8b8b8" stroke-width="1" fill="none"/>
<path d="M703.80 541.20L712.80 541.20M705.12 538.02L711.48 544.38M708.30 536.70L708.30 545.70M711.48 538.02L705.12 544.38" stroke="#0028d8" stroke-width="1.5"/>
<g transform="translate(717,544.6) scale(0.9433,1)"><text x="0" y="0" font-family="Liberation Sans" font-size="11" fill="#000" stroke="#000" stroke-width="0.22" text-anchor="start" textLength="117.67" lengthAdjust="spacing" style="white-space:pre" >Make this the new default</text></g>
<rect x="729.8" y="556.2" width="89.20000000000005" height="19.399999999999977" fill="#efefef"/><path d="M730.3 575.1V556.7H818.5" stroke="#fff" stroke-width="1" fill="none"/><path d="M730.3 574.85H818.25V556.7" stroke="#404040" stroke-width="1.5" fill="none"/><path d="M731.3 573.6H817V557.7" stroke="#b8b8b8" stroke-width="1" fill="none"/>
<path d="M741.70 566.30L750.70 566.30M743.02 563.12L749.38 569.48M746.20 561.80L746.20 570.80M749.38 563.12L743.02 569.48" stroke="#0028d8" stroke-width="1.5"/>
<g transform="translate(754.7,570.5) scale(0.9574,1)"><text x="0" y="0" font-family="Liberation Sans" font-size="11.5" fill="#000" font-weight="bold" stroke="#000" stroke-width="0.22" text-anchor="start" textLength="55.67" lengthAdjust="spacing" style="white-space:pre" >Customize</text></g>
<rect x="698" y="580.8" width="70.89999999999998" height="27.0" fill="#efefef"/><path d="M698.5 607.3V581.3H768.4" stroke="#fff" stroke-width="1" fill="none"/><path d="M698.5 607.05H768.15V581.3" stroke="#404040" stroke-width="1.5" fill="none"/><path d="M699.5 605.8H766.9V582.3" stroke="#b8b8b8" stroke-width="1" fill="none"/>
<circle cx="714.7" cy="594.5" r="8.6" fill="none" stroke="#e00018" stroke-width="2"/><path d="M710.6 590.4L718.8 598.6M718.8 590.4L710.6 598.6" stroke="#e00018" stroke-width="2.6"/>
<g transform="translate(730.6,598.7) scale(0.9411,1)"><text x="0" y="0" font-family="Liberation Sans" font-size="11.5" fill="#000" font-weight="bold" stroke="#000" stroke-width="0.22" text-anchor="start" textLength="35.49" lengthAdjust="spacing" style="white-space:pre" >Cancel</text></g>
<rect x="794.3" y="580.8" width="70.90000000000009" height="27.0" fill="#efefef"/><path d="M794.8 607.3V581.3H864.7" stroke="#fff" stroke-width="1" fill="none"/><path d="M794.8 607.05H864.45V581.3" stroke="#404040" stroke-width="1.5" fill="none"/><path d="M795.8 605.8H863.2V582.3" stroke="#b8b8b8" stroke-width="1" fill="none"/>
<g transform="translate(809.8,598.7) scale(0.7710,1)"><text x="0" y="0" font-family="Liberation Sans" font-size="11.5" fill="#000" font-weight="bold" stroke="#000" stroke-width="0.22" text-anchor="start" style="white-space:pre" >OK</text></g>
<rect x="809.7" y="600.3" width="6.7999999999999545" height="1" fill="#000"/>
<circle cx="838.6" cy="594.5" r="8.6" fill="none" stroke="#10a020" stroke-width="2"/><path d="M834 594.5L837.5 598.5L843.5 590.5" stroke="#10a020" stroke-width="2" fill="none"/>
</svg></body></html>
